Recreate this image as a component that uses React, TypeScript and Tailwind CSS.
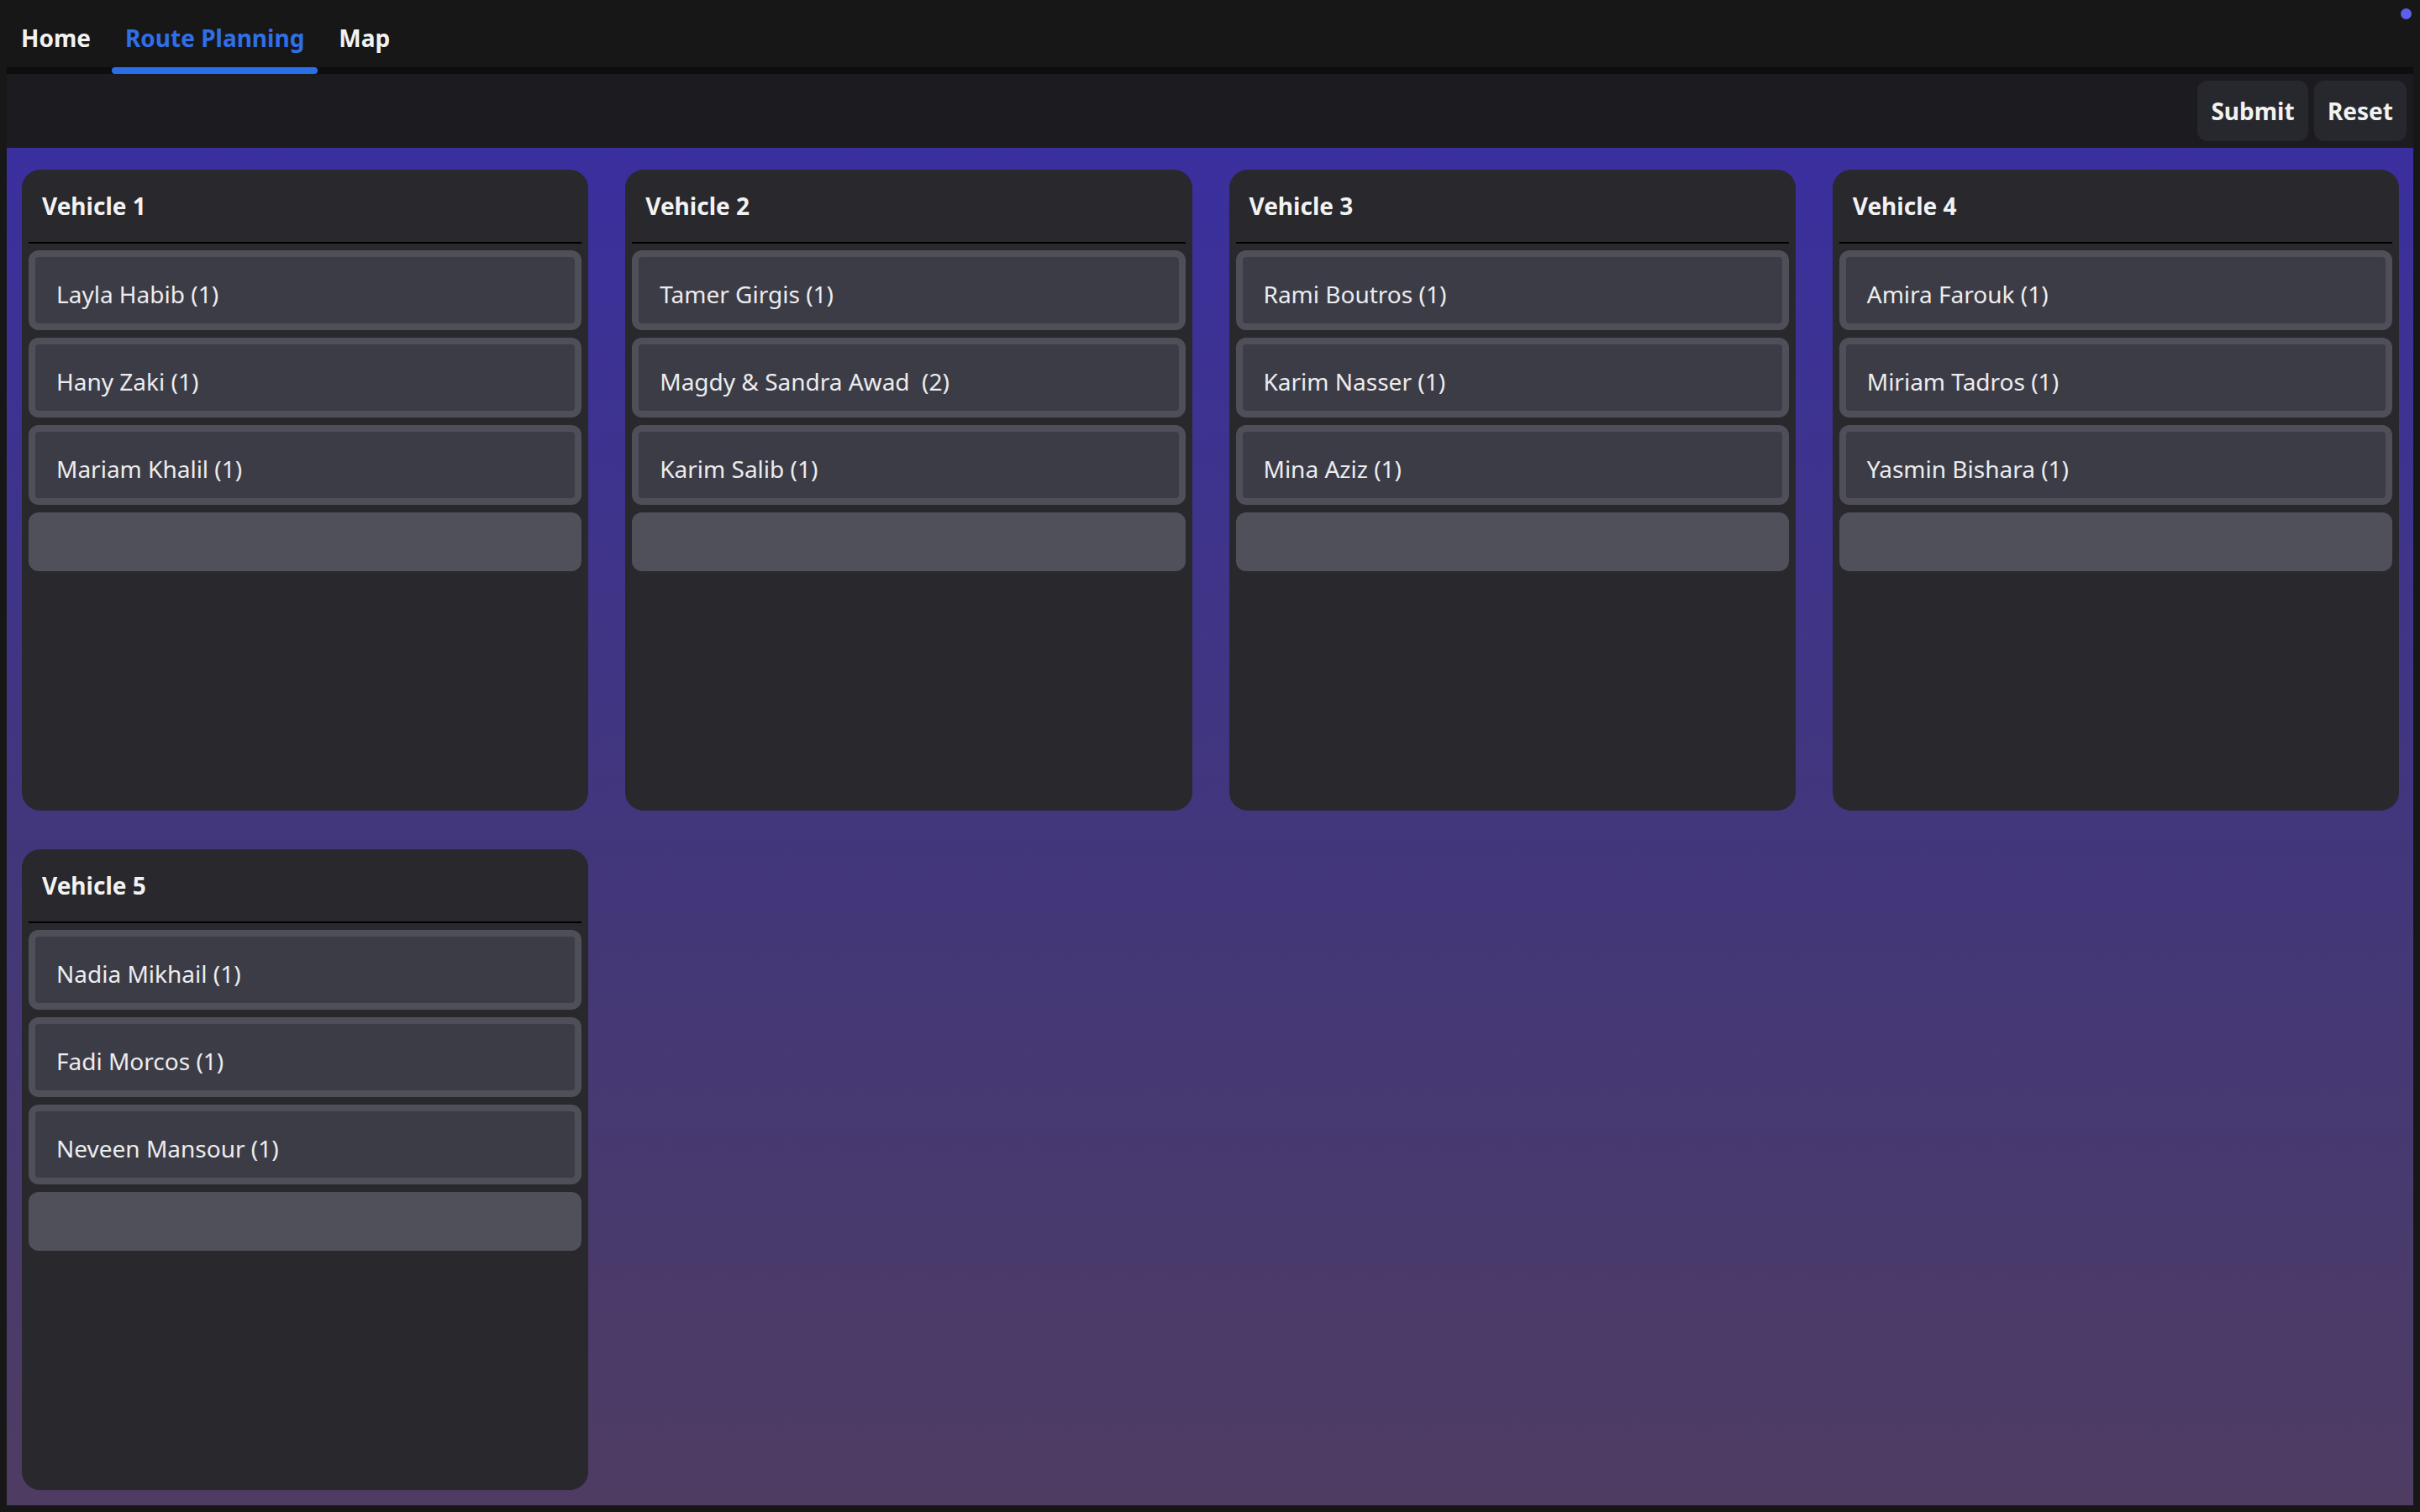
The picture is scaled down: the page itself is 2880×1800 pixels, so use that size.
import { useState } from 'react';

const vehicles = [
  { name: 'Vehicle 1', riders: ['Layla Habib (1)', 'Hany Zaki (1)', 'Mariam Khalil (1)'] },
  { name: 'Vehicle 2', riders: ['Tamer Girgis (1)', 'Magdy & Sandra Awad  (2)', 'Karim Salib (1)'] },
  { name: 'Vehicle 3', riders: ['Rami Boutros (1)', 'Karim Nasser (1)', 'Mina Aziz (1)'] },
  { name: 'Vehicle 4', riders: ['Amira Farouk (1)', 'Miriam Tadros (1)', 'Yasmin Bishara (1)'] },
  { name: 'Vehicle 5', riders: ['Nadia Mikhail (1)', 'Fadi Morcos (1)', 'Neveen Mansour (1)'] },
];

const tabs = ['Home', 'Route Planning', 'Map'];

function VehicleCard({ name, riders }: { name: string; riders: string[] }) {
  return (
    <div className="bg-[#28282d] rounded-[22px] flex flex-col px-2">
      <div className="h-[86px] flex items-center px-4 text-[28px] font-bold text-[#f2f2f2]">{name}</div>
      <div className="h-[2px] bg-black"></div>
      <div className="pt-2 flex flex-col gap-[9px]">
        {riders.map((r) => (
          <div
            key={r}
            className="h-[95px] border-8 border-[#4f4f59] bg-[#3c3c46] rounded-xl px-[25px] pt-[9px] flex items-center text-[28px] text-[#ececee] whitespace-pre"
          >
            {r}
          </div>
        ))}
        {/* drop zone */}
        <div className="h-[70px] bg-[#50505a] rounded-xl"></div>
      </div>
    </div>
  );
}

export default function App() {
  const [tab, setTab] = useState('Route Planning');

  return (
    <div className="relative h-screen bg-[#171717] flex flex-col font-['Noto_Sans',sans-serif]">
      {/* status dot */}
      <div className="absolute top-[10px] right-[10px] w-[13px] h-[13px] rounded-full bg-[#5c60ea]"></div>

      {/* Tabs */}
      <nav className="h-[80px] flex items-center pl-[9px] pt-[10px] gap-[9px]">
        {tabs.map((t) => (
          <button
            key={t}
            onClick={() => setTab(t)}
            className={`relative h-[40px] px-4 text-[28px] font-bold leading-[40px] ${
              tab === t ? 'text-[#2f6fe8]' : 'text-[#f2f2f2]'
            }`}
          >
            {t}
            {tab === t && (
              <span className="absolute left-0 right-0 -bottom-[23px] h-[8px] rounded-full bg-[#2a6ee8] z-10"></span>
            )}
          </button>
        ))}
      </nav>

      <div className="flex-1 mx-2 mb-2 flex flex-col border-t-8 border-[#0e0e0e] min-h-0">
        {/* Toolbar */}
        <div className="h-[88px] bg-[#1b1b20] flex items-center justify-end gap-[7px] pr-2">
          <button className="h-[72px] w-[132px] rounded-xl bg-[#27282d] text-[28px] font-bold text-[#f2f2f2]">Submit</button>
          <button className="h-[72px] w-[110px] rounded-xl bg-[#27282d] text-[28px] font-bold text-[#f2f2f2]">Reset</button>
        </div>

        {/* Vehicles */}
        <div className="flex-1 min-h-0 bg-gradient-to-b from-[#3a2f9e] via-[#42367c] to-[#4e3c62] pl-[18px] pr-[17px] pt-[26px] pb-[18px] grid grid-cols-4 grid-rows-2 gap-x-[44px] gap-y-[46px]">
          {vehicles.map((v) => (
            <VehicleCard key={v.name} name={v.name} riders={v.riders} />
          ))}
        </div>
      </div>
    </div>
  );
}
